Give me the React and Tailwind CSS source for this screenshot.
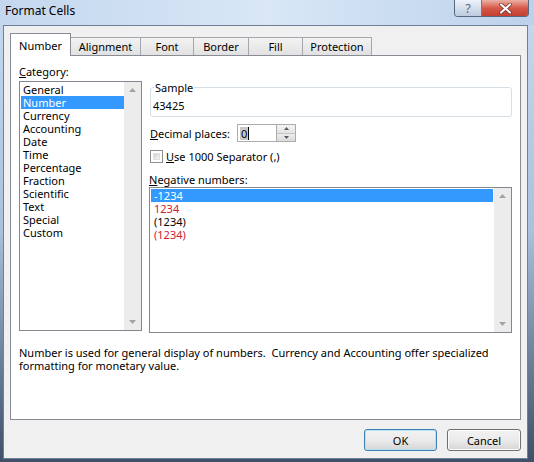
import React from 'react';

const categories = [
  'General',
  'Number',
  'Currency',
  'Accounting',
  'Date',
  'Time',
  'Percentage',
  'Fraction',
  'Scientific',
  'Text',
  'Special',
  'Custom',
];

const negatives = [
  { label: '-1234', red: false },
  { label: '1234', red: true },
  { label: '(1234)', red: false },
  { label: '(1234)', red: true },
];

const tabs = [
  { name: 'Number', w: 'w-[61px]' },
  { name: 'Alignment', w: 'w-[71px]' },
  { name: 'Font', w: 'w-[54px]' },
  { name: 'Border', w: 'w-[56px]' },
  { name: 'Fill', w: 'w-[55px]' },
  { name: 'Protection', w: 'w-[70px]' },
];

// little gray scroll arrows, top and bottom
const Scrollbar = () => (
  <div className="w-[17px] shrink-0 bg-[#ececec] flex flex-col justify-between items-center pt-[6px] pb-[6px]">
    <svg width="7" height="4" viewBox="0 0 7 4">
      <path d="M0 4 L3.5 0 L7 4Z" fill="#a4a4a4" />
    </svg>
    <svg width="7" height="4" viewBox="0 0 7 4">
      <path d="M0 0 L3.5 4 L7 0Z" fill="#a4a4a4" />
    </svg>
  </div>
);

const App = () => {
  return (
    <div className="w-[534px] h-[462px] flex flex-col bg-gradient-to-b from-[#c6d9ef] via-[#a9c1de] to-[#3f5068] font-['Noto_Sans',sans-serif] text-[11px] leading-[13px] text-black overflow-hidden">
      {/* Title bar */}
      <div className="h-[25px] shrink-0 flex justify-between items-start pl-[5px] pr-[5px] bg-gradient-to-r from-[#c3d7ee] via-[#d9e7f6] to-[#bcd2ec]">
        <span className="mt-[4px] text-[12px]">Format Cells</span>
        <div className="flex h-[17px] rounded-b-[4px] border-x border-b border-[#56677e] overflow-hidden">
          <div className="w-[27px] flex items-center justify-center bg-gradient-to-b from-[#eef3f9] to-[#bccbdf] border-r border-[#6c7d94] text-[13px] leading-none text-[#5d6b80]">
            ?
          </div>
          <div className="w-[46px] flex items-center justify-center bg-gradient-to-b from-[#eab1a6] via-[#d6584a] to-[#c43f2f]">
            <svg width="13" height="11" viewBox="0 0 13 11">
              <path d="M2 1.5 L11 9.5 M11 1.5 L2 9.5" stroke="#6b2a22" strokeWidth="3.6" strokeLinecap="round" />
              <path d="M2 1.5 L11 9.5 M11 1.5 L2 9.5" stroke="#ffffff" strokeWidth="2.2" strokeLinecap="round" />
            </svg>
          </div>
        </div>
      </div>

      {/* Client area */}
      <div className="ml-[3px] mr-[6px] h-[434px] border border-[#6f8096] bg-[#f0f0f0] pt-[7px] pl-[6px] pr-[6px]">
        {/* Tabs */}
        <div className="flex items-end h-[22px]">
          {tabs.map((t, i) =>
            i === 0 ? (
              <div
                key={t.name}
                className={`${t.w} h-[23px] -mb-px relative z-10 bg-white border-t border-x border-[#898c95] flex items-center justify-center`}
              >
                {t.name}
              </div>
            ) : (
              <div
                key={t.name}
                className={`${t.w} h-[18px] -ml-px bg-gradient-to-b from-[#f3f3f3] to-[#e1e1e1] border-t border-x border-[#a3a6ad] flex items-center justify-center`}
              >
                {t.name}
              </div>
            )
          )}
        </div>

        {/* Tab panel */}
        <div className="h-[365px] bg-white border border-[#898c95] flex flex-col">
          <div className="flex">
            {/* Category column */}
            <div className="ml-[8px] mt-[9px] flex flex-col">
              <div>
                <span className="underline">C</span>ategory:
              </div>
              <div className="mt-[3px] w-[123px] h-[250px] border border-[#828790] flex">
                <div className="flex-1 pl-px pt-px">
                  {categories.map((c) => (
                    <div
                      key={c}
                      className={`h-[13px] pl-[2px] ${c === 'Number' ? 'bg-[#3399ff] text-white' : ''}`}
                    >
                      {c}
                    </div>
                  ))}
                </div>
                <Scrollbar />
              </div>
            </div>

            {/* Options column */}
            <div className="ml-[7px] mt-[25px] flex flex-col">
              <fieldset className="ml-px w-[362px] border border-[#d5dfe5] rounded-[3px] pl-[2px] pt-[5px] pb-[4px]">
                <legend className="ml-px px-px">Sample</legend>
                <div>43425</div>
              </fieldset>

              <div className="mt-[7px] h-[18px] flex items-center">
                <div className="w-[88px] pl-px">
                  <span className="underline">D</span>ecimal places:
                </div>
                <div className="w-[40px] h-[18px] border border-[#abadb3] bg-white flex items-center pl-[2px]">
                  <span className="bg-[#c8c8c8] px-px">0</span>
                  <span className="w-px h-[13px] bg-black" />
                </div>
                <div className="w-[20px] h-[18px] flex flex-col border border-[#acacac] -ml-px">
                  <div className="flex-1 flex items-center justify-center bg-gradient-to-b from-[#f4f4f4] to-[#e3e3e3] border-b border-[#c5c5c5]">
                    <svg width="5" height="3" viewBox="0 0 5 3">
                      <path d="M0 3 L2.5 0 L5 3Z" fill="#4f5b6b" />
                    </svg>
                  </div>
                  <div className="flex-1 flex items-center justify-center bg-gradient-to-b from-[#ececec] to-[#dcdcdc]">
                    <svg width="5" height="3" viewBox="0 0 5 3">
                      <path d="M0 0 L2.5 3 L5 0Z" fill="#4f5b6b" />
                    </svg>
                  </div>
                </div>
              </div>

              <div className="mt-[8px] h-[13px] flex items-center">
                <div className="ml-px w-[13px] h-[13px] border border-[#8e8f8f] bg-white p-[2px]">
                  <div className="w-full h-full bg-gradient-to-br from-[#cbcfd5] to-[#f6f6f6] border border-[#e0e0e0]" />
                </div>
                <span className="ml-[3px]">
                  <span className="underline">U</span>se 1000 Separator (,)
                </span>
              </div>

              <div className="mt-[10px]">
                <span className="underline">N</span>egative numbers:
              </div>
              <div className="mt-px w-[363px] h-[146px] border border-[#828790] flex">
                <div className="flex-1 pl-px pt-px pr-px">
                  {negatives.map((n, i) => (
                    <div
                      key={i}
                      className={`h-[13px] pl-[3px] ${
                        i === 0 ? 'bg-[#3399ff] text-white' : n.red ? 'text-[#d0202e]' : ''
                      }`}
                    >
                      {n.label}
                    </div>
                  ))}
                </div>
                <Scrollbar />
              </div>
            </div>
          </div>

          <p className="ml-[8px] mt-[13px] w-[480px]">
            Number is used for general display of numbers.&nbsp; Currency and Accounting offer specialized
            formatting for monetary value.
          </p>
        </div>

        {/* Dialog buttons */}
        <div className="mt-[9px] flex justify-end gap-[10px]">
          <button className="w-[73px] h-[22px] rounded-[3px] border border-[#3c7fb1] bg-gradient-to-b from-[#f2f2f2] via-[#ebebeb] to-[#d6d6d6] shadow-[inset_0_0_0_1px_#b6e4f7]">
            OK
          </button>
          <button className="w-[74px] h-[22px] rounded-[3px] border border-[#707070] bg-gradient-to-b from-[#f2f2f2] via-[#ebebeb] to-[#d6d6d6] shadow-[inset_0_0_0_1px_#fcfcfc]">
            Cancel
          </button>
        </div>
      </div>
    </div>
  );
};

export default App;
